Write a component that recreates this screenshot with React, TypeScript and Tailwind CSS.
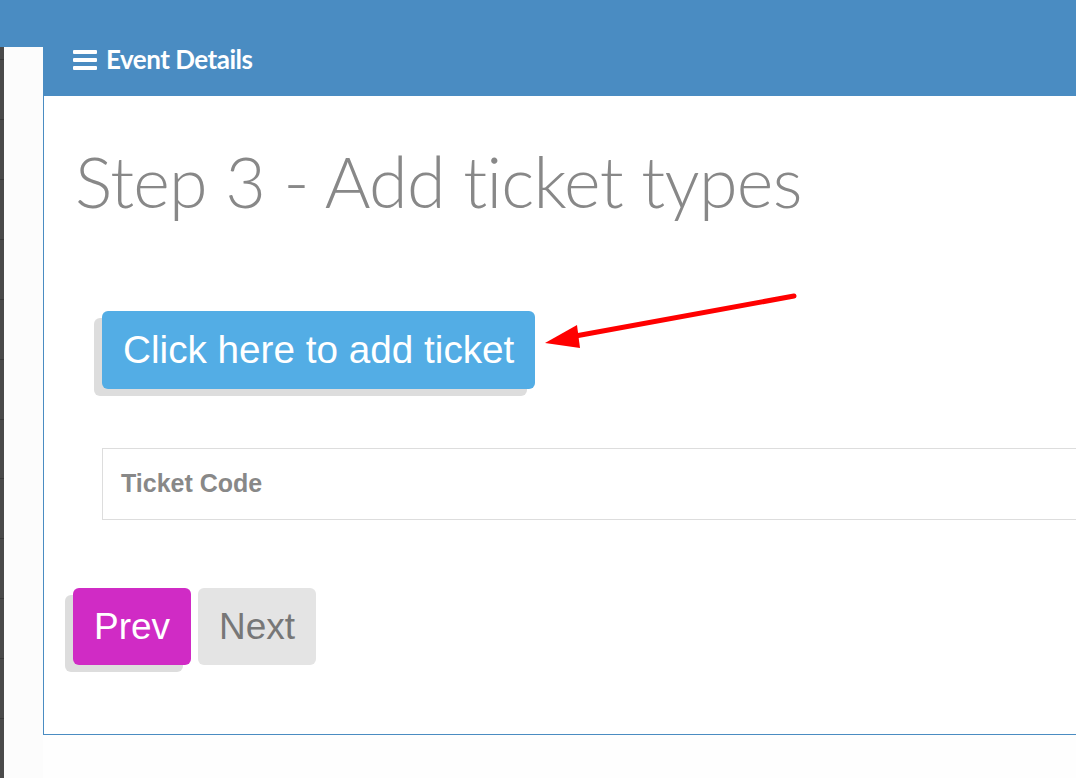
import React from "react";

export default function App() {
  const ticks = Array.from({ length: 12 });
  return (
    <div className="w-[1076px] h-[778px] overflow-hidden bg-[#fefefe] relative">
      <div className="h-[47px] bg-[#4a8cc2]" />
      <div className="flex">
        <div className="w-[43px] h-[731px] flex">
          <div className="w-[4px] h-full bg-[#4a4a4a] flex flex-col pt-[12px]">
            {ticks.map((_, i) => (
              <div key={i} className="h-[62px] border-t border-[#3a3a3a]" />
            ))}
          </div>
          <div className="flex-1 bg-[#fcfcfc]" />
        </div>
        <div className="flex-1 h-[688px] border-l border-b border-[#4a8cc2] bg-white">
          <div className="h-[49px] bg-[#4a8cc2] flex items-start pt-[3px] pl-[29px] gap-[9px]">
            <div className="flex flex-col gap-[4px] w-[24px] mt-[0px]">
              <div className="h-[4px] bg-white rounded-[1px]" />
              <div className="h-[4px] bg-white rounded-[1px]" />
              <div className="h-[4px] bg-white rounded-[1px]" />
            </div>
            <span className="text-white text-[26px] font-bold tracking-[-0.5px] leading-none mt-[-4px]" style={{ fontFamily: "Lato, 'Open Sans', sans-serif" }}>
              Event Details
            </span>
          </div>
          <div className="pl-[31px]">
            <h1 className="text-[#888888] text-[70px] font-light leading-none mt-[50px] tracking-[-0.7px]" style={{ fontFamily: "Lato, 'Open Sans', sans-serif" }}>
              Step 3 - Add ticket types
            </h1>
          </div>
          <div className="pl-[58px] mt-[95px]">
            <button className="h-[78px] px-[21px] rounded-[6px] bg-[#53ade5] text-white text-[38.7px] leading-none shadow-[-8px_7px_0_#dddddd]" style={{ fontFamily: "'Liberation Sans', Arial, sans-serif" }}>
              Click here to add ticket
            </button>
          </div>
          <div className="pl-[58px] mt-[59px]">
            <div className="h-[72px] border border-r-0 border-[#dddddd] flex items-center pl-[18px]">
              <span className="text-[#888888] text-[25px] font-bold" style={{ fontFamily: "'Liberation Sans', Arial, sans-serif" }}>
                Ticket Code
              </span>
            </div>
          </div>
          <div className="pl-[29px] mt-[68px] flex gap-[7px]">
            <button className="w-[118px] h-[77px] rounded-[6px] bg-[#d02bc5] text-white text-[37px] leading-none shadow-[-8px_7px_0_#dddddd]" style={{ fontFamily: "'Liberation Sans', Arial, sans-serif" }}>
              Prev
            </button>
            <button className="w-[118px] h-[77px] rounded-[6px] bg-[#e4e4e4] text-[#777777] text-[37px] leading-none" style={{ fontFamily: "'Liberation Sans', Arial, sans-serif" }}>
              Next
            </button>
          </div>
        </div>
      </div>
      <svg className="absolute left-0 top-0 pointer-events-none" width="1076" height="778">
        <line x1="794" y1="296" x2="570" y2="337" stroke="#ff0000" strokeWidth="5" strokeLinecap="round" />
        <polygon points="545,343 577,325 580,348" fill="#ff0000" />
      </svg>
    </div>
  );
}
